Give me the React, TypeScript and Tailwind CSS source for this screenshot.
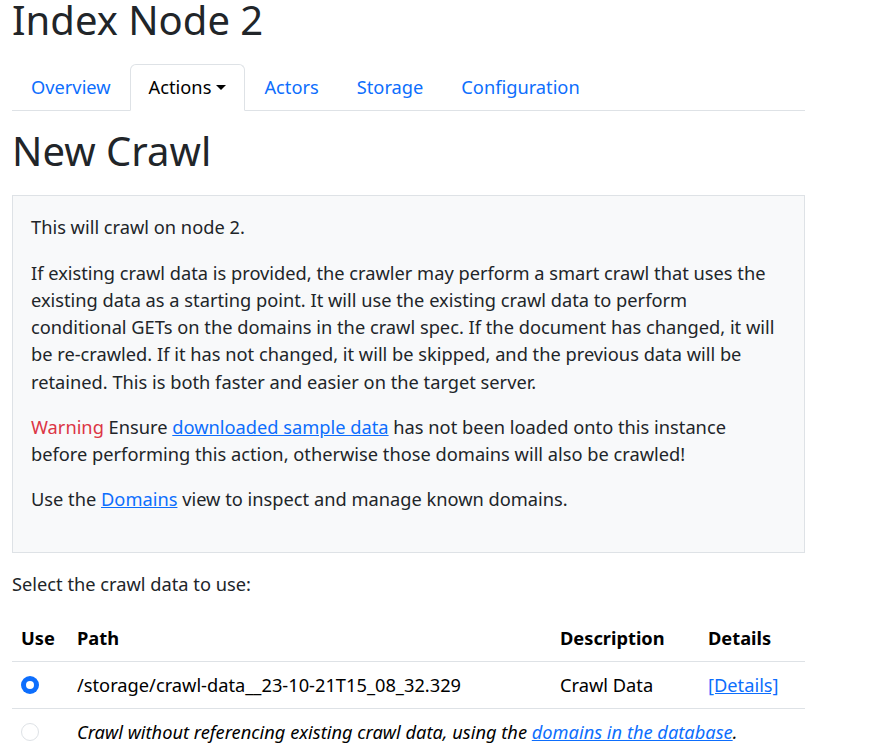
import React from "react";

const tabs = ["Overview", "Actions", "Actors", "Storage", "Configuration"];

function Radio({ checked }: { checked?: boolean }) {
  return checked ? (
    <span className="flex w-[18px] h-[18px] rounded-full bg-[#0d6efd] items-center justify-center">
      <span className="w-[8px] h-[8px] rounded-full bg-white" />
    </span>
  ) : (
    <span className="block w-[18px] h-[18px] rounded-full border border-[#dee2e6] bg-white" />
  );
}

export default function App() {
  return (
    <div
      className="bg-white min-h-[756px] text-[18.25px] leading-[27.25px] text-[#212529]"
      style={{ fontFamily: '"Noto Sans", "Open Sans", sans-serif' }}
    >
      <div className="ml-[12px] w-[793px]">
        <h1 className="text-[40px] leading-[40px] font-normal">Index Node 2</h1>

        <ul className="mt-[24px] flex border-b border-[#dee2e6]">
          {tabs.map((t) =>
            t === "Actions" ? (
              <li
                key={t}
                className="-mb-px px-[18px] pt-[8px] pb-[10px] border border-[#dee2e6] border-b-white rounded-t-[6px] bg-white text-black flex items-center"
              >
                {t}
                <span className="ml-[5px] w-0 h-0 border-l-[5.5px] border-r-[5.5px] border-t-[5.5px] border-l-transparent border-r-transparent border-t-black mt-[1px]" />
              </li>
            ) : (
              <li key={t} className="-mb-px px-[18px] pt-[8px] pb-[10px] border border-transparent text-[#0d6efd]">
                {t}
              </li>
            )
          )}
        </ul>

        <h1 className="mt-[20px] text-[40px] leading-[40px] font-normal">New Crawl</h1>

        <div className="mt-[24px] bg-[#f8f9fa] border border-[#dee2e6] px-[18px] pt-[17px] pb-[21px]">
          <p className="mb-[18px]">This will crawl on node 2.</p>
          <p className="mb-[18px]">
            If existing crawl data is provided, the crawler may perform a smart crawl that uses the existing data as a
            starting point. It will use the existing crawl data to perform conditional GETs on the domains in the crawl
            spec. If the document has changed, it will be re-crawled. If it has not changed, it will be skipped, and the
            previous data will be retained. This is both faster and easier on the target server.
          </p>
          <p className="mb-[18px]">
            <span className="text-[#dc3545]">Warning</span> Ensure{" "}
            <a className="text-[#0d6efd] underline">downloaded sample data</a> has not been loaded onto this instance
            before performing this action, otherwise those domains will also be crawled!
          </p>
          <p className="mb-[18px]">
            Use the <a className="text-[#0d6efd] underline">Domains</a> view to inspect and manage known domains.
          </p>
        </div>

        <p className="mt-[17px] mb-[19px]">Select the crawl data to use:</p>

        <table className="w-full border-collapse text-black">
          <thead>
            <tr className="border-b border-[#dee2e6]">
              <th className="text-left font-bold px-[9px] pt-[8px] pb-[10px] w-[56px]">Use</th>
              <th className="text-left font-bold px-[9px] pt-[8px] pb-[10px] w-[483px]">Path</th>
              <th className="text-left font-bold px-[9px] pt-[8px] pb-[10px] w-[148px]">Description</th>
              <th className="text-left font-bold px-[9px] pt-[8px] pb-[10px]">Details</th>
            </tr>
          </thead>
          <tbody>
            <tr className="border-b border-[#dee2e6]">
              <td className="px-[9px] pt-[9px] pb-[10px] align-middle">
                <Radio checked />
              </td>
              <td className="px-[9px] pt-[9px] pb-[10px]">/storage/crawl-data__23-10-21T15_08_32.329</td>
              <td className="px-[9px] pt-[9px] pb-[10px]">Crawl Data</td>
              <td className="px-[9px] pt-[9px] pb-[10px]">
                <a className="text-[#0d6efd] underline">[Details]</a>
              </td>
            </tr>
            <tr>
              <td className="px-[9px] pt-[9px] pb-[10px] align-middle">
                <Radio />
              </td>
              <td colSpan={3} className="px-[9px] pt-[9px] pb-[10px] italic">
                Crawl without referencing existing crawl data, using the{" "}
                <a className="text-[#0d6efd] underline">domains in the database</a>.
              </td>
            </tr>
          </tbody>
        </table>
      </div>
    </div>
  );
}
